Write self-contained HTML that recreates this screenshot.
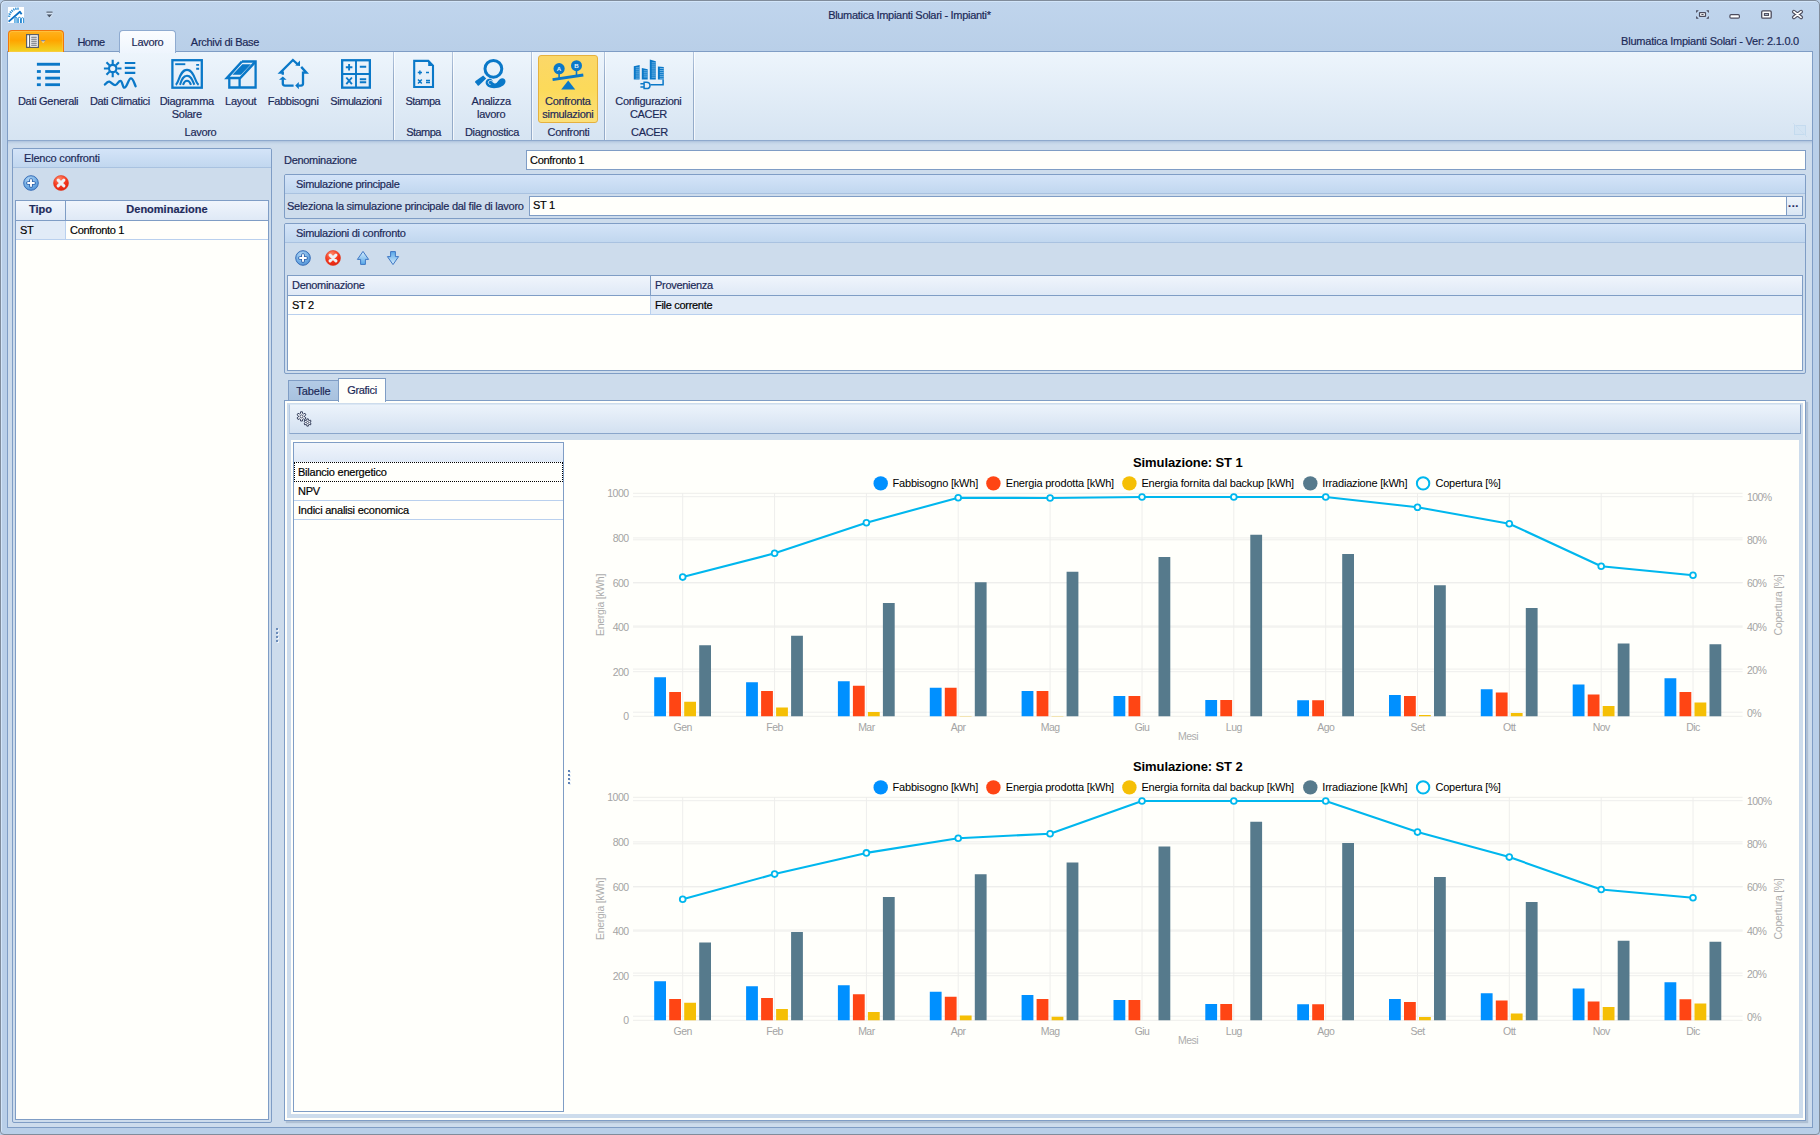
<!DOCTYPE html>
<html lang="it"><head><meta charset="utf-8"><title>Blumatica Impianti Solari - Impianti*</title>
<style>
*{box-sizing:border-box;margin:0;padding:0}
html,body{width:1820px;height:1135px;overflow:hidden}
body{position:relative;background:#b9cfe8;font-family:"Liberation Sans",sans-serif;font-size:11px;letter-spacing:-0.3px;color:#1b2957;-webkit-text-stroke:0.18px}
.a{position:absolute}
.t{position:absolute;white-space:nowrap;line-height:14px;height:14px}
.c{text-align:center}
.k{color:#000}
.b{font-weight:bold;letter-spacing:0}
.hdr{background:linear-gradient(#d4e4f8,#c1d7ef);border-bottom:1px solid #a9c2e0}
.pn{border:1px solid #7f9dc5;border-radius:2px}
.gh{background:linear-gradient(#f0f5fc,#dfe9f6)}
svg{position:absolute;overflow:visible}
</style></head>
<body>
<div class="a" style="left:0;top:0;width:1820px;height:1135px;border:1px solid #808c9b;border-radius:5px 5px 4px 4px;background:linear-gradient(#c0d5ed 0,#b9cfe8 50px,#b9cfe8 100%);box-shadow:inset 1px 1px 0 #d2e5f9"></div>
<div class="a" style="left:7px;top:51px;width:1806px;height:1077px;border:1px solid #7f9dc5;background:#cddcec"></div>
<svg style="left:8px;top:7px" width="16" height="16" viewBox="0 0 16 16">
<rect width="16" height="16" fill="#fff"/>
<path d="M2.20 9.36L-0.07 9.00M2.70 7.58L0.58 6.70M3.61 5.96L1.75 4.60M4.87 4.59L3.38 2.84M6.41 3.56L5.37 1.51M8.16 2.92L7.62 0.68M10.00 2.70L10.00 0.40" stroke="#1f86d2" stroke-width="1.25"/>
<path d="M0.6 14.6L11.9 4.7L13.6 7.2" fill="none" stroke="#0b6fc4" stroke-width="1.8" stroke-linejoin="round"/>
<path d="M6.8 16v-4.4a1.2 1.2 0 0 1 2.4 0v4.4" fill="#a8d6f2" stroke="#2a8fd8" stroke-width=".9"/>
<path d="M10.3 16v-4.6a1.1 1.1 0 0 1 2.2 0v4.6M13.4 16v-4.2a1.1 1.1 0 0 1 2.2 0v4.2" fill="none" stroke="#1f86d2" stroke-width=".95"/>
</svg>
<svg style="left:46px;top:11px" width="8" height="8" viewBox="0 0 8 8">
<rect x="0.5" y="0.6" width="6" height="1.2" fill="#4a5565"/><rect x="0.5" y="1.8" width="6" height="0.8" fill="#e8f0fa"/>
<path d="M0.8 3.4h5.4l-2.7 3z" fill="#4a5565"/><path d="M6.2 3.6l.6.2-3 3.4-.3-.6z" fill="#e8f0fa" opacity=".9"/>
</svg>
<div class="t c" style="left:709.4px;top:8px;width:400px">Blumatica Impianti Solari - Impianti*</div>
<svg style="left:1690px;top:6px" width="122" height="18" viewBox="0 0 122 18">
<g fill="#4b4b5c"><path d="M6.1 4.2h2.7l-2.7 2.7zM18.9 4.2h-2.7l2.7 2.7zM6.1 12.8h2.7l-2.7-2.7zM18.9 12.8h-2.7l2.7-2.7z"/></g>
<g fill="#fff" stroke="#4b4b5c" stroke-width="1.2">
<rect x="9.5" y="6.6" width="6" height="3.8" rx=".5"/>
<rect x="39.9" y="8.7" width="9.5" height="3.5" rx="1.2"/>
<rect x="71.7" y="4.8" width="9.5" height="7.4" rx="1.2" stroke-width="1.3"/>
<rect x="74.4" y="7.6" width="4.1" height="1.8" fill="#c8daef" stroke-width="1.1"/>
</g>
<path d="M11.4 8.5h2.2" stroke="#4b4b5c" stroke-width="1"/>
<path d="M103.9 5.7L111.1 11.3M111.1 5.7L103.9 11.3" fill="none" stroke="#4b4b5c" stroke-width="3.9" stroke-linecap="round"/>
<path d="M103.9 5.7L111.1 11.3M111.1 5.7L103.9 11.3" fill="none" stroke="#fff" stroke-width="1.7" stroke-linecap="round"/>
</svg>
<div class="t" style="right:21px;top:34px;letter-spacing:-0.23px">Blumatica Impianti Solari - Ver: 2.1.0.0</div>
<div class="a" style="left:8px;top:52px;width:1804px;height:88px;background:linear-gradient(#edf5fc 0,#e4eef8 40%,#d6e4f2 100%)"></div>
<div class="a" style="left:8px;top:140px;width:1804px;height:1px;background:#8ea9cd"></div>
<div class="a" style="left:8px;top:141px;width:1804px;height:4px;background:linear-gradient(#adc2dc,#c4d5e8 50%,#cddcec)"></div>
<div class="a" style="left:8px;top:30px;width:56px;height:22px;border:1px solid #f0780a;border-bottom:none;border-radius:4px 4px 0 0;background:linear-gradient(#ffb21e 0,#ffa400 45%,#f6c417 80%,#efd426 100%);box-shadow:inset 0 0 0 1px rgba(255,200,80,.6)"></div>
<svg style="left:26px;top:34px" width="22" height="14" viewBox="0 0 22 14">
<rect x="0.6" y="0.6" width="11.8" height="12.8" fill="#fff" stroke="#5a5f68" stroke-width="1.2"/>
<path d="M3.6 .6v12.8" stroke="#5a5f68" stroke-width="1.1"/>
<path d="M5.2 3.2h5.6M5.2 5.2h5.6M5.2 7.2h5.6M5.2 9.2h5.6M5.2 11.2h5.6" stroke="#5a5f68" stroke-width="1"/>
<path d="M14.6 6h5l-2.5 2.8z" fill="#8d8a93"/><path d="M15.4 7.2l1.7 2 1.9-2z" fill="#f6e9b0" opacity=".8"/>
</svg>
<div class="t c" style="left:66px;top:35px;width:50px;letter-spacing:-0.56px">Home</div>
<div class="a" style="left:119px;top:30px;width:57px;height:23px;border:1px solid #8fabd0;border-bottom:none;border-radius:4px 4px 0 0;background:linear-gradient(#fbfdff,#eef5fd)"></div>
<div class="t c" style="left:119px;top:35px;width:57px">Lavoro</div>
<div class="t c" style="left:180px;top:35px;width:90px">Archivi di Base</div>
<div class="a" style="left:393px;top:52px;width:1px;height:88px;background:linear-gradient(#b4c6de,#94abc9 30%,#94abc9)"></div><div class="a" style="left:394px;top:52px;width:1px;height:88px;background:rgba(255,255,255,.7)"></div>
<div class="a" style="left:452px;top:52px;width:1px;height:88px;background:linear-gradient(#b4c6de,#94abc9 30%,#94abc9)"></div><div class="a" style="left:453px;top:52px;width:1px;height:88px;background:rgba(255,255,255,.7)"></div>
<div class="a" style="left:531px;top:52px;width:1px;height:88px;background:linear-gradient(#b4c6de,#94abc9 30%,#94abc9)"></div><div class="a" style="left:532px;top:52px;width:1px;height:88px;background:rgba(255,255,255,.7)"></div>
<div class="a" style="left:604px;top:52px;width:1px;height:88px;background:linear-gradient(#b4c6de,#94abc9 30%,#94abc9)"></div><div class="a" style="left:605px;top:52px;width:1px;height:88px;background:rgba(255,255,255,.7)"></div>
<div class="a" style="left:693px;top:52px;width:1px;height:88px;background:linear-gradient(#b4c6de,#94abc9 30%,#94abc9)"></div><div class="a" style="left:694px;top:52px;width:1px;height:88px;background:rgba(255,255,255,.7)"></div>
<div class="a" style="left:538px;top:55px;width:60px;height:68px;border:1px solid #e5b13f;border-radius:3px;background:linear-gradient(#fbd768,#fcda5a 50%,#fbe07a)"></div>
<div class="t c" style="left:150.5px;top:125px;width:100px">Lavoro</div>
<div class="t c" style="left:373.5px;top:125px;width:100px;letter-spacing:-0.55px">Stampa</div>
<div class="t c" style="left:442px;top:125px;width:100px">Diagnostica</div>
<div class="t c" style="left:518.5px;top:125px;width:100px">Confronti</div>
<div class="t c" style="left:599.5px;top:125px;width:100px">CACER</div>
<div class="t c" style="left:-1.9px;top:94px;width:100px">Dati Generali</div>
<div class="t c" style="left:69.9px;top:94px;width:100px">Dati Climatici</div>
<div class="t c" style="left:136.8px;top:94px;width:100px">Diagramma</div><div class="t c" style="left:136.8px;top:107px;width:100px">Solare</div>
<div class="t c" style="left:190.7px;top:94px;width:100px">Layout</div>
<div class="t c" style="left:243.2px;top:94px;width:100px">Fabbisogni</div>
<div class="t c" style="left:305.9px;top:94px;width:100px;letter-spacing:-0.47px">Simulazioni</div>
<div class="t c" style="left:372.8px;top:94px;width:100px;letter-spacing:-0.55px">Stampa</div>
<div class="t c" style="left:441.2px;top:94px;width:100px">Analizza</div><div class="t c" style="left:441.2px;top:107px;width:100px">lavoro</div>
<div class="t c" style="left:517.9px;top:94px;width:100px">Confronta</div><div class="t c" style="left:517.9px;top:107px;width:100px">simulazioni</div>
<div class="t c" style="left:598.4px;top:94px;width:100px">Configurazioni</div><div class="t c" style="left:598.4px;top:107px;width:100px">CACER</div>
<svg style="left:32.0px;top:58px" width="32" height="32" viewBox="0 0 32 32"><g fill="#0a78c8"><rect x="4.9" y="4.8" width="23.1" height="2.9"/><rect x="4.9" y="12.1" width="3.9" height="2.8"/><rect x="13.2" y="12.1" width="14.8" height="2.8"/><rect x="4.9" y="18.7" width="3.9" height="2.8"/><rect x="13.2" y="18.7" width="14.8" height="2.8"/><rect x="4.9" y="25.3" width="3.9" height="2.8"/><rect x="13.2" y="25.3" width="14.8" height="2.8"/></g></svg>
<svg style="left:104.0px;top:58px" width="32" height="32" viewBox="0 0 32 32"><g fill="none" stroke="#0a78c8" stroke-width="2.2"><path d="M13.30 10.50L17.50 10.50M11.95 13.75L14.92 16.72M8.70 15.10L8.70 19.30M5.45 13.75L2.48 16.72M4.10 10.50L-0.10 10.50M5.45 7.25L2.48 4.28M8.70 5.90L8.70 1.70M11.95 7.25L14.92 4.28" stroke-width="2.1"/><circle cx="8.7" cy="10.5" r="3.7" fill="#eaf2fb"/><path d="M20.8 5h10.5M20.8 9.9h10.5M20.8 14.9h10.5"/><path d="M0.9 26.6C2.4 24.8 3.9 23.2 5.4 23.6C7.6 24.2 9.2 27.6 11.5 27C13.6 26.4 14.4 22.8 16.4 22.8C18.6 22.8 18.4 29.7 20.4 29.7C23 29.7 24.4 20.4 26.9 20.4C29.2 20.4 30.2 25.4 31.6 28.2" stroke-width="2.3" stroke-linecap="round"/></g></svg>
<svg style="left:171.0px;top:58px" width="32" height="32" viewBox="0 0 32 32"><g fill="none" stroke="#0a78c8"><rect x="1.4" y="2.2" width="29.4" height="27.5" stroke-width="2.3"/><path d="M4.2 6.2h10.1" stroke-width="1.9"/><path d="M25.2 6.9h2.9M25.2 10.7h2.9" stroke-width="1.9"/><path d="M4.8 26.8C8.2 24.4 8.6 11.9 16 11.9C23.4 11.9 23.8 24.4 27.6 26.8" stroke-width="2.1"/><path d="M9 26.8C10.6 22.4 11.6 17.8 16 17.8C20.4 17.8 21.4 22.4 23.4 26.8" stroke-width="2.1"/><path d="M12 26.8C12.9 24.2 13.8 22.7 16 22.7C18.2 22.7 19.1 24.2 20 26.8" stroke-width="2.1"/></g></svg>
<svg style="left:225.0px;top:58px" width="32" height="32" viewBox="0 0 32 32"><g fill="none" stroke="#0a78c8" stroke-width="2.3" stroke-linejoin="miter"><path d="M16.9 3.5H30.6V29.5H4.3V21"/><path d="M14.6 20.4V29.5"/><path d="M16.9 3.5L1.9 20.1H15.2L30.2 3.9" stroke-width="2.5"/></g><path d="M17.4 6.3H25.9L16 16.7H7.4Z" fill="#0a78c8"/></svg>
<svg style="left:277.2px;top:58px" width="32" height="32" viewBox="0 0 32 32"><g fill="none" stroke="#0a78c8" stroke-width="2.3" stroke-linejoin="miter"><path d="M5.8 16.8V14.6H3.3L15.9 2L21 6.6"/><path d="M24.2 8.9L29.4 14.6H26V25.6Q26 27.6 24 27.6H21.4"/><path d="M16.6 27.6H8Q5.8 27.6 5.8 25.6V21.2"/></g><g fill="#0a78c8"><path d="M23 2.4V8L18.2 7.5Z"/><path d="M18.2 27.6L21.8 24V31.2Z"/><path d="M5.8 18.5L9.6 21.8H2Z"/></g></svg>
<svg style="left:340.0px;top:58px" width="32" height="32" viewBox="0 0 32 32"><g fill="none" stroke="#0a78c8"><rect x="2.15" y="2.25" width="27.7" height="27.4" stroke-width="2.3"/><path d="M16 2.2V29.8M2 16H30" stroke-width="1.9"/><path d="M5.8 9.2H12.4M9.1 5.9V12.5M19.8 8.8H26.2M6.3 19.5L11.9 26.2M11.9 19.5L6.3 26.2M19.8 21.2H26.2M19.8 24.2H26.2" stroke-width="1.9"/></g></svg>
<svg style="left:407.0px;top:58px" width="32" height="32" viewBox="0 0 32 32"><g fill="none" stroke="#0a78c8"><path d="M7.2 2.9H21.3L26 7.6V29H7.2Z" stroke-width="2.1" stroke-linejoin="miter"/><path d="M21.2 2.4V8H26.8Z" fill="#0a78c8" stroke="none"/><path d="M10.8 14.5H15M12.9 12.4V16.6M19 14.5H22M11 21.4L14.8 25.4M14.8 21.4L11 25.4M19 22.4H23M19 24.6H23" stroke-width="1.5"/></g></svg>
<svg style="left:475.2px;top:58px" width="32" height="32" viewBox="0 0 32 32"><circle cx="18.4" cy="10.8" r="8.4" fill="none" stroke="#0a78c8" stroke-width="3"/><path d="M8.2 17.4L11.2 20.4L3.9 27.5Q3.2 28 2.7 27.4L0.2 24.2Q-0.2 23.6 0.5 23Z" fill="#0a78c8"/><path d="M10.6 24.6C10.6 21.6 13.6 19.9 16 21C18.4 22.2 17.8 25.7 20 25.5C22.6 25.3 24 20.2 27.2 20.2C29.4 20.2 30.6 21.6 30.5 23.6C30.3 27.6 24.8 30.3 19 30.3C14.4 30.3 10.6 28 10.6 24.6Z" fill="#0a78c8"/><path d="M18.4 24.8C17.8 22.6 15 21.8 13.7 23.3C12.7 24.7 13.7 26.5 15.5 26.4" fill="none" stroke="#dfeaf6" stroke-width="1"/></svg>
<svg style="left:552.0px;top:58px" width="32" height="32" viewBox="0 0 32 32"><g fill="#0a78c8"><circle cx="7.1" cy="10.7" r="5.6"/><circle cx="24.5" cy="7.7" r="5.5"/><path d="M16.2 22.6L23.2 31.4H9.2Z"/></g><path d="M7.1 16V20.4M24.5 13V17.6" stroke="#0a78c8" stroke-width="1.6"/><path d="M0.6 21.6L31.3 17" stroke="#0a78c8" stroke-width="2.8"/><text x="7.1" y="12.9" font-size="6.2" font-weight="bold" fill="#e6f2fb" text-anchor="middle" font-family="Liberation Sans,sans-serif" letter-spacing="0">A</text><text x="24.5" y="9.9" font-size="6.2" font-weight="bold" fill="#e6f2fb" text-anchor="middle" font-family="Liberation Sans,sans-serif" letter-spacing="0">B</text></svg>
<svg style="left:632.4px;top:58px" width="32" height="32" viewBox="0 0 32 32"><path d="M1.8 8.2L7.6 7V21.6H1.8Z" fill="#0a78c8"/><path d="M3.7 9.8H7.6" stroke="#7fbde8" stroke-width=".85"/><path d="M3.7 11.8H7.6" stroke="#7fbde8" stroke-width=".85"/><path d="M3.7 13.9H7.6" stroke="#7fbde8" stroke-width=".85"/><path d="M3.7 15.9H7.6" stroke="#7fbde8" stroke-width=".85"/><path d="M3.7 18.0H7.6" stroke="#7fbde8" stroke-width=".85"/><path d="M3.7 20.1H7.6" stroke="#7fbde8" stroke-width=".85"/><path d="M9.8 10.1L15.700000000000001 11.2V21.6H9.8Z" fill="#0a78c8"/><path d="M11.7 12.8H15.700000000000001" stroke="#7fbde8" stroke-width=".85"/><path d="M11.7 14.8H15.700000000000001" stroke="#7fbde8" stroke-width=".85"/><path d="M11.7 16.9H15.700000000000001" stroke="#7fbde8" stroke-width=".85"/><path d="M11.7 18.9H15.700000000000001" stroke="#7fbde8" stroke-width=".85"/><path d="M17.8 1.6L23.8 3.2V21.6H17.8Z" fill="#0a78c8"/><path d="M19.7 4.8H23.8" stroke="#7fbde8" stroke-width=".85"/><path d="M19.7 6.9H23.8" stroke="#7fbde8" stroke-width=".85"/><path d="M19.7 8.9H23.8" stroke="#7fbde8" stroke-width=".85"/><path d="M19.7 10.9H23.8" stroke="#7fbde8" stroke-width=".85"/><path d="M19.7 13.0H23.8" stroke="#7fbde8" stroke-width=".85"/><path d="M19.7 15.1H23.8" stroke="#7fbde8" stroke-width=".85"/><path d="M19.7 17.1H23.8" stroke="#7fbde8" stroke-width=".85"/><path d="M19.7 19.2H23.8" stroke="#7fbde8" stroke-width=".85"/><path d="M25.9 8.5L31.799999999999997 8.9V21.6H25.9Z" fill="#0a78c8"/><path d="M27.8 10.5H31.799999999999997" stroke="#7fbde8" stroke-width=".85"/><path d="M27.8 12.6H31.799999999999997" stroke="#7fbde8" stroke-width=".85"/><path d="M27.8 14.6H31.799999999999997" stroke="#7fbde8" stroke-width=".85"/><path d="M27.8 16.7H31.799999999999997" stroke="#7fbde8" stroke-width=".85"/><path d="M27.8 18.7H31.799999999999997" stroke="#7fbde8" stroke-width=".85"/><path d="M27.8 20.8H31.799999999999997" stroke="#7fbde8" stroke-width=".85"/><path d="M18.4 26.7H31.1V21.4" fill="none" stroke="#0a78c8" stroke-width="1.5"/><path d="M12.1 24.2H14.4Q18 24.2 18 27.4Q18 30.6 14.4 30.6H12.1Z" fill="none" stroke="#0a78c8" stroke-width="1.5"/><path d="M8.4 25.8H12M8.4 28.9H12" stroke="#0a78c8" stroke-width="1.5"/></svg>
<svg style="left:1792px;top:122px" width="16" height="16" viewBox="0 0 16 16" opacity=".55"><rect x="2.5" y="3.5" width="11" height="9" fill="#cfe3f4" stroke="#b5d3ec"/><path d="M1 1L15 15" stroke="#c3d9ee" stroke-width="1"/></svg>
<div class="a pn" style="left:12px;top:148px;width:260px;height:975px;background:#cddcec"></div>
<div class="a hdr" style="left:13px;top:149px;width:258px;height:19px;border-radius:1px 1px 0 0"></div>
<div class="t" style="left:24px;top:151px;letter-spacing:-0.19px">Elenco confronti</div>
<svg style="left:23px;top:175px" width="16" height="16" viewBox="0 0 16 16">
<defs><radialGradient id="gp31183" cx=".4" cy=".3" r=".8"><stop offset="0" stop-color="#b4d8f6"/><stop offset=".65" stop-color="#6aa8e2"/><stop offset="1" stop-color="#4a88d0"/></radialGradient></defs>
<circle cx="8" cy="8" r="7.3" fill="url(#gp31183)" stroke="#3a6fb8" stroke-width="1"/>
<path d="M8 5V11M5 8H11" stroke="#2f62aa" stroke-width="3.7" stroke-linecap="round"/>
<path d="M8 5V11M5 8H11" stroke="#fff" stroke-width="1.9" stroke-linecap="round"/></svg>
<svg style="left:53px;top:175px" width="16" height="16" viewBox="0 0 16 16">
<defs><radialGradient id="gc61183" cx=".4" cy=".25" r=".85"><stop offset="0" stop-color="#ff8a6a"/><stop offset=".55" stop-color="#f5361c"/><stop offset="1" stop-color="#d81f0e"/></radialGradient></defs>
<circle cx="8" cy="8" r="7.5" fill="url(#gc61183)" stroke="#e03a20" stroke-width=".6"/>
<path d="M5.1 5.1L10.9 10.9M10.9 5.1L5.1 10.9" stroke="#edf1f5" stroke-width="3" stroke-linecap="round"/></svg>
<div class="a" style="left:15px;top:200px;width:254px;height:920px;border:1px solid #7f9dc5;background:#fffffb"></div>
<div class="a gh" style="left:16px;top:201px;width:252px;height:20px;border-bottom:1px solid #7f9dc5"></div>
<div class="a" style="left:65px;top:201px;width:1px;height:19px;background:#7f9dc5"></div>
<div class="t c b" style="left:16px;top:202px;width:49px;color:#1e2b5c">Tipo</div>
<div class="t c b" style="left:66px;top:202px;width:202px;color:#1e2b5c">Denominazione</div>
<div class="a" style="left:16px;top:221px;width:252px;height:19px;border-bottom:1px solid #b9d0ee"></div>
<div class="a" style="left:16px;top:221px;width:50px;height:18px;background:#e1ebf7;border-right:1px solid #b9d0ee"></div>
<div class="t k" style="left:20px;top:223px">ST</div>
<div class="t k" style="left:70px;top:223px">Confronto 1</div>
<div class="a" style="left:276px;top:628px;width:2px;height:2px;background:#6a8cba;box-shadow:1px 1px 0 #eef4fb"></div><div class="a" style="left:276px;top:632px;width:2px;height:2px;background:#6a8cba;box-shadow:1px 1px 0 #eef4fb"></div><div class="a" style="left:276px;top:636px;width:2px;height:2px;background:#6a8cba;box-shadow:1px 1px 0 #eef4fb"></div><div class="a" style="left:276px;top:640px;width:2px;height:2px;background:#6a8cba;box-shadow:1px 1px 0 #eef4fb"></div>
<div class="t" style="left:284px;top:153px">Denominazione</div>
<div class="a" style="left:526px;top:150px;width:1280px;height:20px;border:1px solid #7f9dc5;background:#fffffb"></div>
<div class="t k" style="left:530px;top:153px">Confronto 1</div>
<div class="a pn" style="left:284px;top:174px;width:1522px;height:45px;background:#cddcec"></div>
<div class="a hdr" style="left:285px;top:175px;width:1520px;height:19px;border-radius:1px 1px 0 0"></div>
<div class="t" style="left:296px;top:177px">Simulazione principale</div>
<div class="t" style="left:287px;top:199px;letter-spacing:-0.26px">Seleziona la simulazione principale dal file di lavoro</div>
<div class="a" style="left:529px;top:196px;width:1274px;height:20px;border:1px solid #7f9dc5;background:#fffffb"></div>
<div class="a" style="left:1786px;top:197px;width:16px;height:18px;border-left:1px solid #7f9dc5;background:linear-gradient(#eef4fb,#d9e6f4)"></div>
<div class="t b" style="left:1788px;top:196px;letter-spacing:.6px;font-size:11px;color:#1e2b5c">...</div>
<div class="t k" style="left:533px;top:198px">ST 1</div>
<div class="a pn" style="left:284px;top:223px;width:1522px;height:151px;background:#cddcec"></div>
<div class="a hdr" style="left:285px;top:224px;width:1520px;height:19px;border-radius:1px 1px 0 0"></div>
<div class="t" style="left:296px;top:226px">Simulazioni di confronto</div>
<svg style="left:295px;top:250px" width="16" height="16" viewBox="0 0 16 16">
<defs><radialGradient id="gp303258" cx=".4" cy=".3" r=".8"><stop offset="0" stop-color="#b4d8f6"/><stop offset=".65" stop-color="#6aa8e2"/><stop offset="1" stop-color="#4a88d0"/></radialGradient></defs>
<circle cx="8" cy="8" r="7.3" fill="url(#gp303258)" stroke="#3a6fb8" stroke-width="1"/>
<path d="M8 5V11M5 8H11" stroke="#2f62aa" stroke-width="3.7" stroke-linecap="round"/>
<path d="M8 5V11M5 8H11" stroke="#fff" stroke-width="1.9" stroke-linecap="round"/></svg>
<svg style="left:325px;top:250px" width="16" height="16" viewBox="0 0 16 16">
<defs><radialGradient id="gc333258" cx=".4" cy=".25" r=".85"><stop offset="0" stop-color="#ff8a6a"/><stop offset=".55" stop-color="#f5361c"/><stop offset="1" stop-color="#d81f0e"/></radialGradient></defs>
<circle cx="8" cy="8" r="7.5" fill="url(#gc333258)" stroke="#e03a20" stroke-width=".6"/>
<path d="M5.1 5.1L10.9 10.9M10.9 5.1L5.1 10.9" stroke="#edf1f5" stroke-width="3" stroke-linecap="round"/></svg>
<svg style="left:355px;top:250px" width="16" height="16" viewBox="0 0 16 16">
<defs><linearGradient id="ga363" x1="0" y1="0" x2="0" y2="1"><stop offset="0" stop-color="#d6ecfc"/><stop offset="1" stop-color="#58a8e8"/></linearGradient></defs>
<path d="M8 1.4L13.6 9.4H10.4V14.4H5.6V9.4H2.4Z" fill="url(#ga363)" stroke="#3f78c4" stroke-width="1" stroke-linejoin="round"/></svg>
<svg style="left:385px;top:250px" width="16" height="16" viewBox="0 0 16 16">
<defs><linearGradient id="ga393" x1="0" y1="0" x2="0" y2="1"><stop offset="0" stop-color="#d6ecfc"/><stop offset="1" stop-color="#58a8e8"/></linearGradient></defs>
<path transform="rotate(180 8 8)" d="M8 1.4L13.6 9.4H10.4V14.4H5.6V9.4H2.4Z" fill="url(#ga393)" stroke="#3f78c4" stroke-width="1" stroke-linejoin="round"/></svg>
<div class="a" style="left:287px;top:275px;width:1516px;height:96px;border:1px solid #7f9dc5;background:#fffffb"></div>
<div class="a gh" style="left:288px;top:276px;width:1514px;height:20px;border-bottom:1px solid #7f9dc5"></div>
<div class="a" style="left:650px;top:276px;width:1px;height:19px;background:#7f9dc5"></div>
<div class="t" style="left:292px;top:278px">Denominazione</div>
<div class="t" style="left:655px;top:278px">Provenienza</div>
<div class="a" style="left:288px;top:296px;width:1514px;height:19px;border-bottom:1px solid #b9d0ee"></div>
<div class="a" style="left:650px;top:296px;width:1152px;height:18px;background:#e1ebf7;border-left:1px solid #b9d0ee"></div>
<div class="t k" style="left:292px;top:298px">ST 2</div>
<div class="t k" style="left:655px;top:298px">File corrente</div>
<div class="a" style="left:284px;top:400px;width:1522px;height:721px;border:1px solid #7f9dc5;background:#fffffb;box-shadow:2px 2px 1px rgba(120,140,170,.35)"></div>
<div class="a" style="left:287px;top:403px;width:1516px;height:715px;background:#cddcec"></div>
<div class="a" style="left:288px;top:380px;width:51px;height:20px;border:1px solid #7f9dc5;border-bottom:none;background:linear-gradient(#b3cbe6,#a8c2df)"></div>
<div class="a" style="left:338px;top:378px;width:48px;height:24px;border:1px solid #7f9dc5;border-bottom:none;background:#fffffb"></div>
<div class="t c" style="left:288px;top:383.5px;width:51px;letter-spacing:-0.08px">Tabelle</div>
<div class="t c" style="left:338px;top:382.5px;width:48px">Grafici</div>
<div class="a" style="left:289px;top:404px;width:1512px;height:30px;border:1px solid #8aa6cb;border-top-color:#dbe7f4;border-left-color:#b4c9e2;background:linear-gradient(#ecf3fb,#e0eaf6 50%,#d3e1f1)"></div>
<svg style="left:296px;top:411px" width="16" height="16" viewBox="0 0 16 16"><path d="M4.41 2.50L4.57 0.79L6.43 0.79L6.59 2.50L7.47 3.00L9.02 2.29L9.96 3.91L8.56 4.89L8.56 5.91L9.96 6.89L9.02 8.51L7.47 7.80L6.59 8.30L6.43 10.01L4.57 10.01L4.41 8.30L3.53 7.80L1.98 8.51L1.04 6.89L2.44 5.91L2.44 4.89L1.04 3.91L1.98 2.29L3.53 3.00Z" fill="#f3f6fb" stroke="#39435f" stroke-width="1" stroke-linejoin="round"/><circle cx="5.5" cy="5.4" r="1.5" fill="#fff" stroke="#39435f" stroke-width=".9"/><path d="M10.74 9.21L10.86 7.87L12.34 7.87L12.46 9.21L13.15 9.61L14.37 9.05L15.11 10.32L14.01 11.10L14.01 11.90L15.11 12.68L14.37 13.95L13.15 13.39L12.46 13.79L12.34 15.13L10.86 15.13L10.74 13.79L10.05 13.39L8.83 13.95L8.09 12.68L9.19 11.90L9.19 11.10L8.09 10.32L8.83 9.05L10.05 9.61Z" fill="#f3f6fb" stroke="#39435f" stroke-width="1" stroke-linejoin="round"/><circle cx="11.6" cy="11.5" r="1.1" fill="#fff" stroke="#39435f" stroke-width=".9"/></svg>
<div class="a" style="left:291px;top:440px;width:1508px;height:674px;background:#fffffb"></div>
<div class="a" style="left:293px;top:442px;width:271px;height:670px;border:1px solid #7f9dc5;background:#fffffb"></div>
<div class="a gh" style="left:294px;top:443px;width:269px;height:19px"></div>
<div class="a" style="left:294px;top:462px;width:269px;height:20px;border:1px dotted #000"></div>
<div class="a" style="left:294px;top:500px;width:269px;height:1px;background:#b9d0ee"></div>
<div class="a" style="left:294px;top:519px;width:269px;height:1px;background:#b9d0ee"></div>
<div class="t k" style="left:298px;top:465px;letter-spacing:-0.23px">Bilancio energetico</div>
<div class="t k" style="left:298px;top:484px">NPV</div>
<div class="t k" style="left:298px;top:503px;letter-spacing:-0.22px">Indici analisi economica</div>
<div class="a" style="left:568px;top:770px;width:2px;height:2px;background:#5f83b6;box-shadow:1px 1px 0 #e6eef8"></div><div class="a" style="left:568px;top:774px;width:2px;height:2px;background:#5f83b6;box-shadow:1px 1px 0 #e6eef8"></div><div class="a" style="left:568px;top:778px;width:2px;height:2px;background:#5f83b6;box-shadow:1px 1px 0 #e6eef8"></div><div class="a" style="left:568px;top:782px;width:2px;height:2px;background:#5f83b6;box-shadow:1px 1px 0 #e6eef8"></div>
<svg style="left:0;top:0" width="1820" height="1135" viewBox="0 0 1820 1135">
<g transform="translate(0,0)">
<path d="M682.7 493V716.3M774.6 493V716.3M866.4 493V716.3M958.2 493V716.3M1050.1 493V716.3M1142.0 493V716.3M1233.8 493V716.3M1325.7 493V716.3M1417.5 493V716.3M1509.3 493V716.3M1601.2 493V716.3M1693.0 493V716.3M633 716.3H1742.6M633 671.7H1742.6M633 627.1H1742.6M633 582.5H1742.6M633 537.9H1742.6M633 493.3H1742.6M633 712.2H1742.6M633 669.1H1742.6M633 626.0H1742.6M633 582.9H1742.6M633 539.8H1742.6M633 496.7H1742.6" stroke="#eeeeec" stroke-width="1" fill="none"/>
<path d="M654.2 716.3v-39.0h11.8v39.0zM746.1 716.3v-34.1h11.8v34.1zM837.9 716.3v-35.0h11.8v35.0zM929.8 716.3v-28.5h11.8v28.5zM1021.6 716.3v-25.2h11.8v25.2zM1113.5 716.3v-20.3h11.8v20.3zM1205.3 716.3v-16.3h11.8v16.3zM1297.2 716.3v-16.1h11.8v16.1zM1389.0 716.3v-21.4h11.8v21.4zM1480.8 716.3v-27.0h11.8v27.0zM1572.7 716.3v-31.9h11.8v31.9zM1664.5 716.3v-38.1h11.8v38.1z" fill="#0090ff"/>
<path d="M669.2 716.3v-24.3h11.8v24.3zM761.1 716.3v-25.2h11.8v25.2zM852.9 716.3v-30.6h11.8v30.6zM944.8 716.3v-28.5h11.8v28.5zM1036.6 716.3v-25.2h11.8v25.2zM1128.5 716.3v-20.3h11.8v20.3zM1220.3 716.3v-16.3h11.8v16.3zM1312.2 716.3v-16.1h11.8v16.1zM1404.0 716.3v-20.3h11.8v20.3zM1495.8 716.3v-23.9h11.8v23.9zM1587.7 716.3v-21.9h11.8v21.9zM1679.5 716.3v-24.3h11.8v24.3z" fill="#ff4514"/>
<path d="M684.2 716.3v-14.5h11.8v14.5zM776.1 716.3v-8.9h11.8v8.9zM867.9 716.3v-4.2h11.8v4.2zM959.8 716.3v-0.2h11.8v0.2zM1051.6 716.3v-0.2h11.8v0.2zM1419.0 716.3v-1.3h11.8v1.3zM1510.8 716.3v-3.3h11.8v3.3zM1602.7 716.3v-10.3h11.8v10.3zM1694.5 716.3v-13.8h11.8v13.8z" fill="#f5bf05"/>
<path d="M699.2 716.3v-71.1h11.8v71.1zM791.1 716.3v-80.5h11.8v80.5zM882.9 716.3v-113.3h11.8v113.3zM974.8 716.3v-134.0h11.8v134.0zM1066.6 716.3v-144.5h11.8v144.5zM1158.5 716.3v-159.2h11.8v159.2zM1250.3 716.3v-181.5h11.8v181.5zM1342.2 716.3v-162.3h11.8v162.3zM1434.0 716.3v-131.1h11.8v131.1zM1525.8 716.3v-108.4h11.8v108.4zM1617.7 716.3v-72.9h11.8v72.9zM1709.5 716.3v-72.0h11.8v72.0z" fill="#567a8c"/>
<polyline points="682.7,577.1 774.6,553.3 866.4,522.7 958.2,497.7 1050.1,498.0 1142.0,497.0 1233.8,497.0 1325.7,497.0 1417.5,507.3 1509.3,523.7 1601.2,566.2 1693.0,575.3" fill="none" stroke="#00b7ee" stroke-width="2.1" stroke-linejoin="round"/>
<circle cx="682.7" cy="577.1" r="2.9" fill="#fffffb" stroke="#00b7ee" stroke-width="1.8"/>
<circle cx="774.6" cy="553.3" r="2.9" fill="#fffffb" stroke="#00b7ee" stroke-width="1.8"/>
<circle cx="866.4" cy="522.7" r="2.9" fill="#fffffb" stroke="#00b7ee" stroke-width="1.8"/>
<circle cx="958.2" cy="497.7" r="2.9" fill="#fffffb" stroke="#00b7ee" stroke-width="1.8"/>
<circle cx="1050.1" cy="498.0" r="2.9" fill="#fffffb" stroke="#00b7ee" stroke-width="1.8"/>
<circle cx="1142.0" cy="497.0" r="2.9" fill="#fffffb" stroke="#00b7ee" stroke-width="1.8"/>
<circle cx="1233.8" cy="497.0" r="2.9" fill="#fffffb" stroke="#00b7ee" stroke-width="1.8"/>
<circle cx="1325.7" cy="497.0" r="2.9" fill="#fffffb" stroke="#00b7ee" stroke-width="1.8"/>
<circle cx="1417.5" cy="507.3" r="2.9" fill="#fffffb" stroke="#00b7ee" stroke-width="1.8"/>
<circle cx="1509.3" cy="523.7" r="2.9" fill="#fffffb" stroke="#00b7ee" stroke-width="1.8"/>
<circle cx="1601.2" cy="566.2" r="2.9" fill="#fffffb" stroke="#00b7ee" stroke-width="1.8"/>
<circle cx="1693.0" cy="575.3" r="2.9" fill="#fffffb" stroke="#00b7ee" stroke-width="1.8"/>
<g font-family="Liberation Sans,sans-serif" font-size="10.5" letter-spacing="-0.55" fill="#a4a4a4" text-anchor="end">
<text x="628.5" y="720.3">0</text>
<text x="628.5" y="675.7">200</text>
<text x="628.5" y="631.1">400</text>
<text x="628.5" y="586.5">600</text>
<text x="628.5" y="541.9">800</text>
<text x="628.5" y="497.3">1000</text>
</g>
<g font-family="Liberation Sans,sans-serif" font-size="10.5" letter-spacing="-0.55" fill="#a4a4a4">
<text x="1747" y="716.7">0%</text>
<text x="1747" y="673.6">20%</text>
<text x="1747" y="630.5">40%</text>
<text x="1747" y="587.4">60%</text>
<text x="1747" y="544.3">80%</text>
<text x="1747" y="501.2">100%</text>
</g>
<g font-family="Liberation Sans,sans-serif" font-size="10.5" letter-spacing="-0.55" fill="#a4a4a4" text-anchor="middle">
<text x="682.7" y="731.1">Gen</text>
<text x="774.6" y="731.1">Feb</text>
<text x="866.4" y="731.1">Mar</text>
<text x="958.2" y="731.1">Apr</text>
<text x="1050.1" y="731.1">Mag</text>
<text x="1142.0" y="731.1">Giu</text>
<text x="1233.8" y="731.1">Lug</text>
<text x="1325.7" y="731.1">Ago</text>
<text x="1417.5" y="731.1">Set</text>
<text x="1509.3" y="731.1">Ott</text>
<text x="1601.2" y="731.1">Nov</text>
<text x="1693.0" y="731.1">Dic</text>
<text x="1188" y="740.4" fill="#adadad">Mesi</text>
<text transform="translate(603.8,605) rotate(-90)" fill="#adadad" letter-spacing="-0.3">Energia [kWh]</text>
<text transform="translate(1782,605) rotate(-90)" fill="#adadad" letter-spacing="-0.3">Copertura [%]</text>
</g>
<text x="1187.8" y="467.3" font-family="Liberation Sans,sans-serif" font-size="13" font-weight="bold" fill="#000" text-anchor="middle" letter-spacing="-0.1">Simulazione: ST 1</text>
<circle cx="880.7" cy="483.4" r="7.2" fill="#0090ff"/>
<text x="892.6" y="487.3" font-family="Liberation Sans,sans-serif" font-size="11" fill="#000" letter-spacing="-0.2">Fabbisogno [kWh]</text>
<circle cx="993.4" cy="483.4" r="7.2" fill="#ff4514"/>
<text x="1005.8" y="487.3" font-family="Liberation Sans,sans-serif" font-size="11" fill="#000" letter-spacing="-0.2">Energia prodotta [kWh]</text>
<circle cx="1129.4" cy="483.4" r="7.2" fill="#f5bf05"/>
<text x="1141.4" y="487.3" font-family="Liberation Sans,sans-serif" font-size="11" fill="#000" letter-spacing="-0.2">Energia fornita dal backup [kWh]</text>
<circle cx="1310.3" cy="483.4" r="7.2" fill="#567a8c"/>
<text x="1322.3" y="487.3" font-family="Liberation Sans,sans-serif" font-size="11" fill="#000" letter-spacing="-0.2">Irradiazione [kWh]</text>
<circle cx="1423.1" cy="483.4" r="6.2" fill="#fffffb" stroke="#00b7ee" stroke-width="2"/>
<text x="1435.4" y="487.3" font-family="Liberation Sans,sans-serif" font-size="11" fill="#000" letter-spacing="-0.2">Copertura [%]</text>
</g>
<g transform="translate(0,304)">
<path d="M682.7 493V716.3M774.6 493V716.3M866.4 493V716.3M958.2 493V716.3M1050.1 493V716.3M1142.0 493V716.3M1233.8 493V716.3M1325.7 493V716.3M1417.5 493V716.3M1509.3 493V716.3M1601.2 493V716.3M1693.0 493V716.3M633 716.3H1742.6M633 671.7H1742.6M633 627.1H1742.6M633 582.5H1742.6M633 537.9H1742.6M633 493.3H1742.6M633 712.2H1742.6M633 669.1H1742.6M633 626.0H1742.6M633 582.9H1742.6M633 539.8H1742.6M633 496.7H1742.6" stroke="#eeeeec" stroke-width="1" fill="none"/>
<path d="M654.2 716.3v-39.0h11.8v39.0zM746.1 716.3v-34.1h11.8v34.1zM837.9 716.3v-35.0h11.8v35.0zM929.8 716.3v-28.5h11.8v28.5zM1021.6 716.3v-25.2h11.8v25.2zM1113.5 716.3v-20.3h11.8v20.3zM1205.3 716.3v-16.3h11.8v16.3zM1297.2 716.3v-16.1h11.8v16.1zM1389.0 716.3v-21.4h11.8v21.4zM1480.8 716.3v-27.0h11.8v27.0zM1572.7 716.3v-31.9h11.8v31.9zM1664.5 716.3v-38.1h11.8v38.1z" fill="#0090ff"/>
<path d="M669.2 716.3v-21.2h11.8v21.2zM761.1 716.3v-22.3h11.8v22.3zM852.9 716.3v-26.1h11.8v26.1zM944.8 716.3v-23.6h11.8v23.6zM1036.6 716.3v-21.4h11.8v21.4zM1128.5 716.3v-20.3h11.8v20.3zM1220.3 716.3v-16.3h11.8v16.3zM1312.2 716.3v-16.1h11.8v16.1zM1404.0 716.3v-18.3h11.8v18.3zM1495.8 716.3v-19.8h11.8v19.8zM1587.7 716.3v-18.7h11.8v18.7zM1679.5 716.3v-21.0h11.8v21.0z" fill="#ff4514"/>
<path d="M684.2 716.3v-17.6h11.8v17.6zM776.1 716.3v-11.4h11.8v11.4zM867.9 716.3v-8.3h11.8v8.3zM959.8 716.3v-4.9h11.8v4.9zM1051.6 716.3v-3.6h11.8v3.6zM1419.0 716.3v-3.3h11.8v3.3zM1510.8 716.3v-6.9h11.8v6.9zM1602.7 716.3v-13.2h11.8v13.2zM1694.5 716.3v-16.9h11.8v16.9z" fill="#f5bf05"/>
<path d="M699.2 716.3v-77.8h11.8v77.8zM791.1 716.3v-88.3h11.8v88.3zM882.9 716.3v-123.3h11.8v123.3zM974.8 716.3v-146.1h11.8v146.1zM1066.6 716.3v-157.9h11.8v157.9zM1158.5 716.3v-173.9h11.8v173.9zM1250.3 716.3v-198.5h11.8v198.5zM1342.2 716.3v-177.3h11.8v177.3zM1434.0 716.3v-143.2h11.8v143.2zM1525.8 716.3v-118.2h11.8v118.2zM1617.7 716.3v-79.6h11.8v79.6zM1709.5 716.3v-78.5h11.8v78.5z" fill="#567a8c"/>
<polyline points="682.7,595.3 774.6,570.1 866.4,548.9 958.2,534.2 1050.1,529.7 1142.0,497.0 1233.8,497.0 1325.7,497.0 1417.5,528.1 1509.3,553.1 1601.2,585.5 1693.0,593.7" fill="none" stroke="#00b7ee" stroke-width="2.1" stroke-linejoin="round"/>
<circle cx="682.7" cy="595.3" r="2.9" fill="#fffffb" stroke="#00b7ee" stroke-width="1.8"/>
<circle cx="774.6" cy="570.1" r="2.9" fill="#fffffb" stroke="#00b7ee" stroke-width="1.8"/>
<circle cx="866.4" cy="548.9" r="2.9" fill="#fffffb" stroke="#00b7ee" stroke-width="1.8"/>
<circle cx="958.2" cy="534.2" r="2.9" fill="#fffffb" stroke="#00b7ee" stroke-width="1.8"/>
<circle cx="1050.1" cy="529.7" r="2.9" fill="#fffffb" stroke="#00b7ee" stroke-width="1.8"/>
<circle cx="1142.0" cy="497.0" r="2.9" fill="#fffffb" stroke="#00b7ee" stroke-width="1.8"/>
<circle cx="1233.8" cy="497.0" r="2.9" fill="#fffffb" stroke="#00b7ee" stroke-width="1.8"/>
<circle cx="1325.7" cy="497.0" r="2.9" fill="#fffffb" stroke="#00b7ee" stroke-width="1.8"/>
<circle cx="1417.5" cy="528.1" r="2.9" fill="#fffffb" stroke="#00b7ee" stroke-width="1.8"/>
<circle cx="1509.3" cy="553.1" r="2.9" fill="#fffffb" stroke="#00b7ee" stroke-width="1.8"/>
<circle cx="1601.2" cy="585.5" r="2.9" fill="#fffffb" stroke="#00b7ee" stroke-width="1.8"/>
<circle cx="1693.0" cy="593.7" r="2.9" fill="#fffffb" stroke="#00b7ee" stroke-width="1.8"/>
<g font-family="Liberation Sans,sans-serif" font-size="10.5" letter-spacing="-0.55" fill="#a4a4a4" text-anchor="end">
<text x="628.5" y="720.3">0</text>
<text x="628.5" y="675.7">200</text>
<text x="628.5" y="631.1">400</text>
<text x="628.5" y="586.5">600</text>
<text x="628.5" y="541.9">800</text>
<text x="628.5" y="497.3">1000</text>
</g>
<g font-family="Liberation Sans,sans-serif" font-size="10.5" letter-spacing="-0.55" fill="#a4a4a4">
<text x="1747" y="716.7">0%</text>
<text x="1747" y="673.6">20%</text>
<text x="1747" y="630.5">40%</text>
<text x="1747" y="587.4">60%</text>
<text x="1747" y="544.3">80%</text>
<text x="1747" y="501.2">100%</text>
</g>
<g font-family="Liberation Sans,sans-serif" font-size="10.5" letter-spacing="-0.55" fill="#a4a4a4" text-anchor="middle">
<text x="682.7" y="731.1">Gen</text>
<text x="774.6" y="731.1">Feb</text>
<text x="866.4" y="731.1">Mar</text>
<text x="958.2" y="731.1">Apr</text>
<text x="1050.1" y="731.1">Mag</text>
<text x="1142.0" y="731.1">Giu</text>
<text x="1233.8" y="731.1">Lug</text>
<text x="1325.7" y="731.1">Ago</text>
<text x="1417.5" y="731.1">Set</text>
<text x="1509.3" y="731.1">Ott</text>
<text x="1601.2" y="731.1">Nov</text>
<text x="1693.0" y="731.1">Dic</text>
<text x="1188" y="740.4" fill="#adadad">Mesi</text>
<text transform="translate(603.8,605) rotate(-90)" fill="#adadad" letter-spacing="-0.3">Energia [kWh]</text>
<text transform="translate(1782,605) rotate(-90)" fill="#adadad" letter-spacing="-0.3">Copertura [%]</text>
</g>
<text x="1187.8" y="467.3" font-family="Liberation Sans,sans-serif" font-size="13" font-weight="bold" fill="#000" text-anchor="middle" letter-spacing="-0.1">Simulazione: ST 2</text>
<circle cx="880.7" cy="483.4" r="7.2" fill="#0090ff"/>
<text x="892.6" y="487.3" font-family="Liberation Sans,sans-serif" font-size="11" fill="#000" letter-spacing="-0.2">Fabbisogno [kWh]</text>
<circle cx="993.4" cy="483.4" r="7.2" fill="#ff4514"/>
<text x="1005.8" y="487.3" font-family="Liberation Sans,sans-serif" font-size="11" fill="#000" letter-spacing="-0.2">Energia prodotta [kWh]</text>
<circle cx="1129.4" cy="483.4" r="7.2" fill="#f5bf05"/>
<text x="1141.4" y="487.3" font-family="Liberation Sans,sans-serif" font-size="11" fill="#000" letter-spacing="-0.2">Energia fornita dal backup [kWh]</text>
<circle cx="1310.3" cy="483.4" r="7.2" fill="#567a8c"/>
<text x="1322.3" y="487.3" font-family="Liberation Sans,sans-serif" font-size="11" fill="#000" letter-spacing="-0.2">Irradiazione [kWh]</text>
<circle cx="1423.1" cy="483.4" r="6.2" fill="#fffffb" stroke="#00b7ee" stroke-width="2"/>
<text x="1435.4" y="487.3" font-family="Liberation Sans,sans-serif" font-size="11" fill="#000" letter-spacing="-0.2">Copertura [%]</text>
</g>
</svg>
</body></html>
